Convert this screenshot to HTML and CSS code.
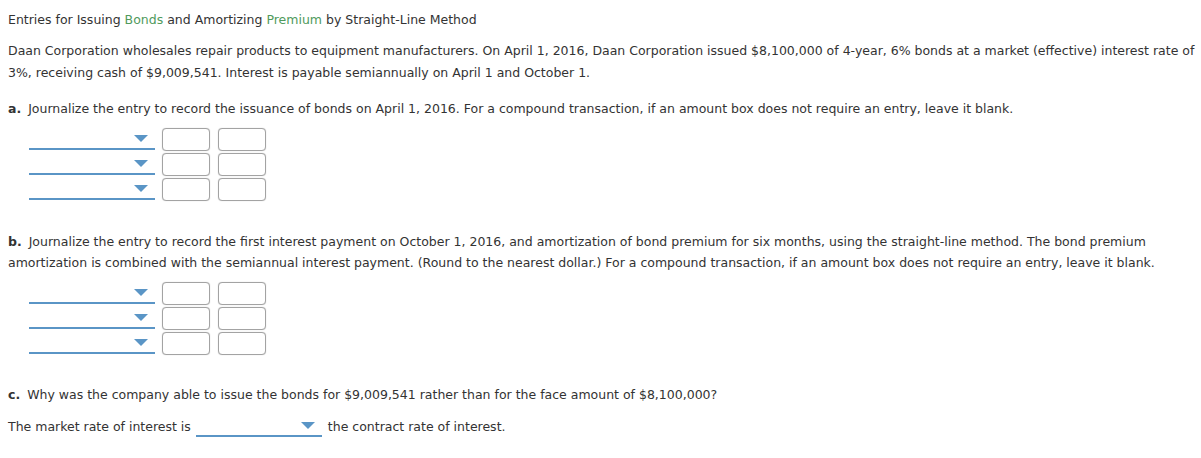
FILE: index.html
```html
<!DOCTYPE html>
<html lang="en">
<head>
    <meta charset="UTF-8">
    <meta name="viewport" content="width=device-width, initial-scale=1.0">
    <title>Entries for Issuing Bonds and Amortizing Premium</title>
    <link rel="stylesheet" href="styles.css">
</head>
<body>
    <div class="page">
        <h1 class="title">Entries for Issuing <span class="term">Bonds</span> and Amortizing <span class="term">Premium</span> by Straight-Line Method</h1>

        <p class="intro">Daan Corporation wholesales repair products to equipment manufacturers. On April 1, 2016, Daan Corporation issued $8,100,000 of 4-year, 6% bonds at a market (effective) interest rate of 3%, receiving cash of $9,009,541. Interest is payable semiannually on April 1 and October 1.</p>

        <p class="question q-a"><b>a.</b> Journalize the entry to record the issuance of bonds on April 1, 2016. For a compound transaction, if an amount box does not require an entry, leave it blank.</p>
        <div class="journal">
            <div class="row">
                <span class="select"><span class="arrow"></span></span>
                <input class="amount" type="text">
                <input class="amount" type="text">
            </div>
            <div class="row">
                <span class="select"><span class="arrow"></span></span>
                <input class="amount" type="text">
                <input class="amount" type="text">
            </div>
            <div class="row">
                <span class="select"><span class="arrow"></span></span>
                <input class="amount" type="text">
                <input class="amount" type="text">
            </div>
        </div>

        <p class="question q-b"><b>b.</b> Journalize the entry to record the first interest payment on October 1, 2016, and amortization of bond premium for six months, using the straight-line method. The bond premium amortization is combined with the semiannual interest payment. (Round to the nearest dollar.) For a compound transaction, if an amount box does not require an entry, leave it blank.</p>
        <div class="journal">
            <div class="row">
                <span class="select"><span class="arrow"></span></span>
                <input class="amount" type="text">
                <input class="amount" type="text">
            </div>
            <div class="row">
                <span class="select"><span class="arrow"></span></span>
                <input class="amount" type="text">
                <input class="amount" type="text">
            </div>
            <div class="row">
                <span class="select"><span class="arrow"></span></span>
                <input class="amount" type="text">
                <input class="amount" type="text">
            </div>
        </div>

        <p class="question q-c"><b>c.</b> Why was the company able to issue the bonds for $9,009,541 rather than for the face amount of $8,100,000?</p>
        <p class="answer">The market rate of interest is <span class="select inline"><span class="arrow"></span></span> the contract rate of interest.</p>
    </div>
</body>
</html>
```

FILE: styles.css
```css
body {
    margin: 0;
    font-family: "DejaVu Sans", Verdana, sans-serif;
    font-size: 12.5px;
    color: #333;
    background: #fff;
}
.page {
    padding: 9px 0 0 8px;
}
.title {
    margin: 0;
    font-size: 12.5px;
    font-weight: normal;
    line-height: 22px;
}
.term {
    color: #4f9a5c;
}
.intro {
    margin: 9px 0 0;
    line-height: 22px;
}
.question {
    margin: 0;
    line-height: 21px;
}
.q-a { margin-top: 14px; }
.q-b { margin-top: 30px; }
.q-c { margin-top: 29px; }
.question b {
    font-weight: bold;
    margin-right: 3px;
}
.journal {
    margin: 9px 0 0 21px;
    display: flex;
    flex-direction: column;
    gap: 2px;
}
.row {
    display: flex;
    align-items: flex-end;
    height: 23px;
}
.select {
    position: relative;
    display: inline-block;
    width: 126px;
    height: 20px;
    border-bottom: 2px solid #5a95c6;
    margin-bottom: 1px;
}
.arrow {
    position: absolute;
    right: 7px;
    bottom: 6px;
    width: 0;
    height: 0;
    border-left: 7px solid transparent;
    border-right: 7px solid transparent;
    border-top: 7px solid #5a95c6;
}
.amount {
    box-sizing: border-box;
    width: 48px;
    height: 23px;
    margin: 0 0 0 8px;
    padding: 0;
    border: 1.5px solid #a3a3a3;
    border-radius: 4px;
    background: #fff;
    box-shadow: 0 0 1px rgba(0, 0, 0, 0.25);
}
.row .select + .amount {
    margin-left: 7px;
}
.answer {
    margin: 10px 0 0;
    line-height: 21px;
}
.select.inline {
    vertical-align: -6px;
    margin: 0 2px 0 1px;
}
```
